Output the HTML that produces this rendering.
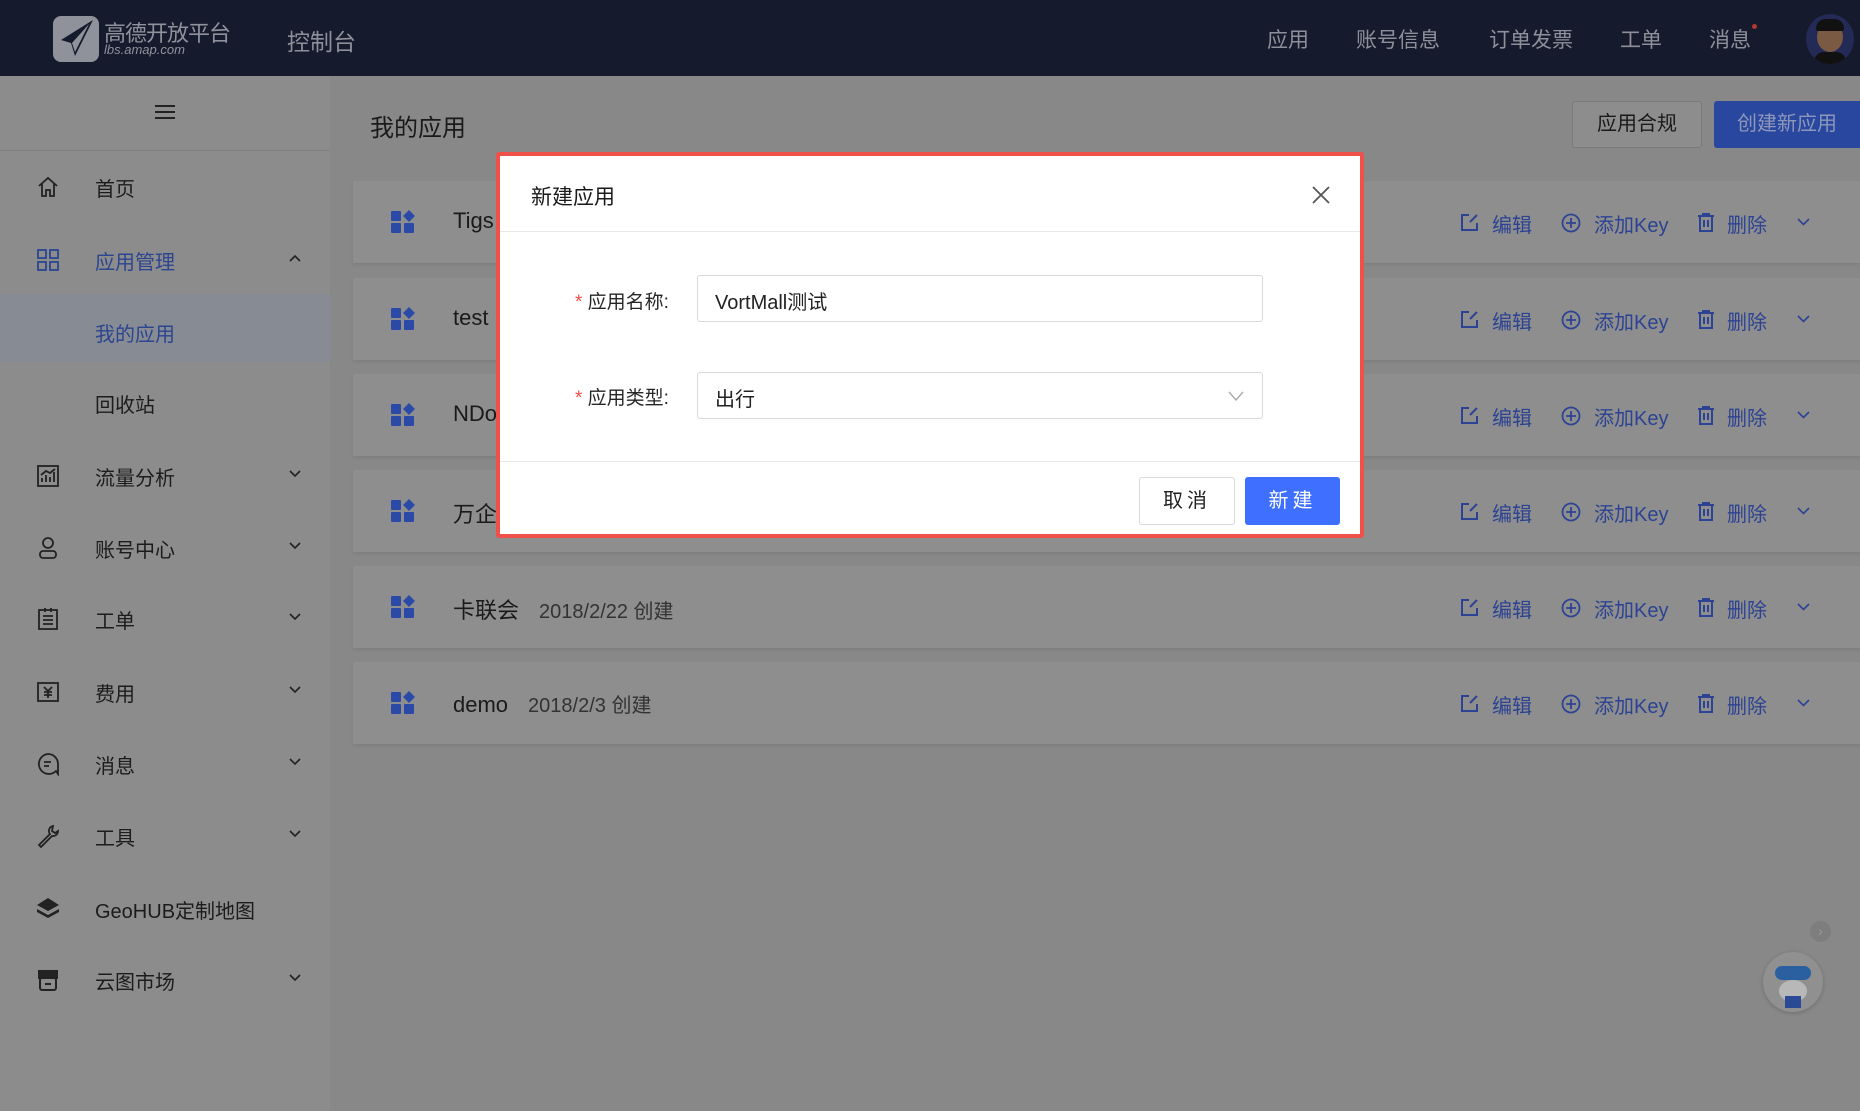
<!DOCTYPE html>
<html><head><meta charset="utf-8"><style>
*{margin:0;padding:0;box-sizing:border-box}
body{width:1860px;height:1111px;overflow:hidden;position:relative;background:#888888;font-family:"Liberation Sans","Noto Sans CJK SC",sans-serif;color:#1e1e1e}
.abs{position:absolute}
.hdr{left:0;top:0;width:1860px;height:76px;background:#161a2d}
.nav{top:24px;font-size:21px;color:#8e9099}
.side{left:0;top:76px;width:330px;height:1035px;background:#8c8c8c}
.mi{position:absolute;left:0;width:330px;height:60px;font-size:20px;color:#1c1c1c}
.mi .t{position:absolute;left:95px;top:16px}
.mi .ic{position:absolute;left:36px;top:18px;width:24px;height:24px}
.mi .ch{position:absolute;left:289px;top:24px}
.card{left:353px;width:1507px;height:82px;background:#8e8e8e;box-shadow:0 2px 3px rgba(0,0,0,.08)}
.card .gi{position:absolute;left:38px;top:29px}
.card .nm{position:absolute;left:100px;top:27px;font-size:22px;color:#1a1a1a}
.card .dt{font-size:20px;color:#333;margin-left:20px}
.act{position:absolute;top:28px;font-size:20px;color:#2c4393}
.ai{position:absolute;top:32px}
.dlg{left:496px;top:152px;width:868px;height:386px;background:#fff;border:4px solid #f0504a;border-radius:3px}
.lbl{position:absolute;font-size:19px;color:#262626}
.inp{position:absolute;left:697px;width:566px;height:47px;border:1px solid #d9d9d9;border-radius:3px;background:#fff;font-size:20px;padding:10px 17px;color:#222}
</style></head><body>
<div class="abs hdr">
  <svg class="abs" style="left:53px;top:16px" width="46" height="46" viewBox="0 0 46 46"><rect x="0" y="0" width="46" height="46" rx="8" fill="#8f929b"/><path d="M40 4 L8 24 L18 27 L22 40 Z" fill="#161a2d"/><path d="M36 8 L19 27 L22 36 Z" fill="#8f929b"/></svg>
  <div class="abs" style="left:104px;top:16px;font-size:22px;color:#8f929b;letter-spacing:-1px">高德开放平台</div>
  <div class="abs" style="left:104px;top:42px;font-size:13px;color:#8f929b;font-style:italic">lbs.amap.com</div>
  <div class="abs" style="left:287px;top:23px;font-size:23px;color:#8e9099">控制台</div>
  <div class="abs nav" style="left:1267px">应用</div>
  <div class="abs nav" style="left:1356px">账号信息</div>
  <div class="abs nav" style="left:1489px">订单发票</div>
  <div class="abs nav" style="left:1620px">工单</div>
  <div class="abs nav" style="left:1709px">消息</div>
  <div class="abs" style="left:1752px;top:24px;width:5px;height:5px;border-radius:50%;background:#b03a2a"></div>
  <div class="abs" style="left:1806px;top:14px;width:48px;height:50px;border-radius:50%;background:#232a55;overflow:hidden">
    <div class="abs" style="left:11px;top:8px;width:26px;height:30px;border-radius:50%;background:#7b5a44"></div>
    <div class="abs" style="left:10px;top:5px;width:28px;height:12px;border-radius:12px 12px 3px 3px;background:#111"></div>
    <div class="abs" style="left:8px;top:38px;width:32px;height:14px;border-radius:10px 10px 0 0;background:#111"></div>
  </div>
</div>
<div class="abs side">
  <div class="abs" style="left:155px;top:29px;width:20px;height:14px;border-top:2px solid #222;border-bottom:2px solid #222"><div style="margin-top:4px;height:2px;background:#222"></div></div>
  <div class="abs" style="left:0;top:74px;width:330px;height:1px;background:#7f7f7f"></div>
  <div class="abs" style="left:0;top:218px;width:330px;height:68px;background:#878b93"></div>
</div>
<div class="mi" style="top:157px"><svg class="ic" viewBox="0 0 24 24" fill="none" stroke="#222" stroke-width="1.8"><path d="M3 11 L12 3 L21 11 M6 9 V21 H10 V15 H14 V21 H18 V9"/></svg><span class="t">首页</span></div>
<div class="mi" style="top:230px;color:#2b4590"><svg class="ic" viewBox="0 0 24 24" fill="none" stroke="#2b4590" stroke-width="1.8"><rect x="2" y="2" width="8" height="8"/><rect x="14" y="2" width="8" height="8"/><rect x="2" y="14" width="8" height="8"/><rect x="14" y="14" width="8" height="8"/></svg><span class="t">应用管理</span><svg class="ch" width="12" height="8" viewBox="0 0 12 8" fill="none" stroke="#222" stroke-width="1.6"><path d="M1 7 L6 2 L11 7"/></svg></div>
<div class="mi" style="top:302px;color:#2b4590"><span class="t">我的应用</span></div>
<div class="mi" style="top:373px"><span class="t">回收站</span></div>
<div class="mi" style="top:446px"><svg class="ic" viewBox="0 0 24 24" fill="none" stroke="#222" stroke-width="1.8"><rect x="2" y="2" width="20" height="20"/><path d="M6 18 V14 M10 18 V11 M14 18 V13 M18 18 V8 M5 11 L10 7 L14 9 L19 5"/></svg><span class="t">流量分析</span><svg class="ch" width="12" height="8" viewBox="0 0 12 8" fill="none" stroke="#222" stroke-width="1.6"><path d="M1 1 L6 6 L11 1"/></svg></div>
<div class="mi" style="top:518px"><svg class="ic" viewBox="0 0 24 24" fill="none" stroke="#222" stroke-width="1.8"><circle cx="12" cy="7" r="5"/><rect x="4" y="15" width="16" height="7" rx="3"/></svg><span class="t">账号中心</span><svg class="ch" width="12" height="8" viewBox="0 0 12 8" fill="none" stroke="#222" stroke-width="1.6"><path d="M1 1 L6 6 L11 1"/></svg></div>
<div class="mi" style="top:589px"><svg class="ic" viewBox="0 0 24 24" fill="none" stroke="#222" stroke-width="1.8"><rect x="3" y="3" width="18" height="19"/><path d="M7 9 H17 M7 13 H17 M7 17 H17 M9 1 V5 M15 1 V5"/></svg><span class="t">工单</span><svg class="ch" width="12" height="8" viewBox="0 0 12 8" fill="none" stroke="#222" stroke-width="1.6"><path d="M1 1 L6 6 L11 1"/></svg></div>
<div class="mi" style="top:662px"><svg class="ic" viewBox="0 0 24 24" fill="none" stroke="#222" stroke-width="1.8"><rect x="2" y="3" width="20" height="18"/><path d="M8 7 L12 11 L16 7 M12 11 V18 M8 12 H16 M8 15 H16"/></svg><span class="t">费用</span><svg class="ch" width="12" height="8" viewBox="0 0 12 8" fill="none" stroke="#222" stroke-width="1.6"><path d="M1 1 L6 6 L11 1"/></svg></div>
<div class="mi" style="top:734px"><svg class="ic" viewBox="0 0 24 24" fill="none" stroke="#222" stroke-width="1.8"><path d="M12 2 A10 10 0 1 0 20 19 L22 22 V12 A10 10 0 0 0 12 2 Z M8 10 H15 M8 14 H13"/></svg><span class="t">消息</span><svg class="ch" width="12" height="8" viewBox="0 0 12 8" fill="none" stroke="#222" stroke-width="1.6"><path d="M1 1 L6 6 L11 1"/></svg></div>
<div class="mi" style="top:806px"><svg class="ic" viewBox="0 0 24 24" fill="none" stroke="#222" stroke-width="1.8"><path d="M17 2 A5 5 0 0 0 14 10 L3 21 L5 23 L16 12 A5 5 0 0 0 22 7 L19 9 L16 7 Z"/></svg><span class="t">工具</span><svg class="ch" width="12" height="8" viewBox="0 0 12 8" fill="none" stroke="#222" stroke-width="1.6"><path d="M1 1 L6 6 L11 1"/></svg></div>
<div class="mi" style="top:879px"><svg class="ic" viewBox="0 0 24 24" fill="#222"><path d="M12 1 L23 8 L12 14 L1 8 Z"/><path d="M1 12 L12 18 L23 12 L23 15 L12 21 L1 15Z"/></svg><span class="t">GeoHUB定制地图</span></div>
<div class="mi" style="top:950px"><svg class="ic" viewBox="0 0 24 24" fill="none" stroke="#222" stroke-width="2"><path d="M3 10 V3 H21 V10 Z" fill="#222"/><rect x="4" y="10" width="16" height="12" rx="2"/><path d="M9 16 H15"/></svg><span class="t">云图市场</span><svg class="ch" width="12" height="8" viewBox="0 0 12 8" fill="none" stroke="#222" stroke-width="1.6"><path d="M1 1 L6 6 L11 1"/></svg></div>

<div class="abs" style="left:370px;top:108px;font-size:24px;color:#1a1a1a">我的应用</div>
<div class="abs" style="left:1572px;top:101px;width:130px;height:47px;border:1px solid #7a7a7a;border-radius:3px;background:#8d8d8d;font-size:20px;text-align:center;line-height:45px;color:#1a1a1a">应用合规</div>
<div class="abs" style="left:1714px;top:101px;width:146px;height:47px;border-radius:3px 0 0 3px;background:#2a479f;font-size:20px;text-align:center;line-height:47px;color:#8c97ba">创建新应用</div>

<div class="abs card" style="top:181px"><svg class="gi" width="24" height="24" viewBox="0 0 24 24" fill="#2b4aa8"><rect x="0" y="1" width="10" height="10" rx="1"/><path d="M18 0 L24 6 L18 12 L12 6Z"/><rect x="0" y="13" width="10" height="10" rx="1"/><rect x="13" y="13" width="10" height="10" rx="1"/></svg><div class="nm">Tigs</div>
<svg class="ai" style="left:1107px" width="19" height="19" viewBox="0 0 19 19" fill="none" stroke="#2c4393" stroke-width="2"><path d="M9 2 H2 V17 H17 V10 M17 2 L10 9"/></svg><div class="act" style="left:1139px">编辑</div>
<svg class="ai" style="left:1208px" width="20" height="20" viewBox="0 0 20 20" fill="none" stroke="#2c4393" stroke-width="1.8"><circle cx="10" cy="10" r="8.5"/><path d="M10 5 V15 M5 10 H15"/></svg><div class="act" style="left:1241px">添加Key</div>
<svg class="ai" style="left:1344px" width="18" height="19" viewBox="0 0 18 19" fill="none" stroke="#2c4393" stroke-width="2"><path d="M1 3 H17 M6 3 V1 H12 V3 M3 3 V18 H15 V3 M7 7 V14 M11 7 V14"/></svg><div class="act" style="left:1374px">删除</div>
<svg class="ai" style="left:1444px;top:37px" width="13" height="8" viewBox="0 0 13 8" fill="none" stroke="#2c4393" stroke-width="1.6"><path d="M1 1 L6.5 6.5 L12 1"/></svg></div>

<div class="abs card" style="top:278px"><svg class="gi" width="24" height="24" viewBox="0 0 24 24" fill="#2b4aa8"><rect x="0" y="1" width="10" height="10" rx="1"/><path d="M18 0 L24 6 L18 12 L12 6Z"/><rect x="0" y="13" width="10" height="10" rx="1"/><rect x="13" y="13" width="10" height="10" rx="1"/></svg><div class="nm">test</div>
<svg class="ai" style="left:1107px" width="19" height="19" viewBox="0 0 19 19" fill="none" stroke="#2c4393" stroke-width="2"><path d="M9 2 H2 V17 H17 V10 M17 2 L10 9"/></svg><div class="act" style="left:1139px">编辑</div>
<svg class="ai" style="left:1208px" width="20" height="20" viewBox="0 0 20 20" fill="none" stroke="#2c4393" stroke-width="1.8"><circle cx="10" cy="10" r="8.5"/><path d="M10 5 V15 M5 10 H15"/></svg><div class="act" style="left:1241px">添加Key</div>
<svg class="ai" style="left:1344px" width="18" height="19" viewBox="0 0 18 19" fill="none" stroke="#2c4393" stroke-width="2"><path d="M1 3 H17 M6 3 V1 H12 V3 M3 3 V18 H15 V3 M7 7 V14 M11 7 V14"/></svg><div class="act" style="left:1374px">删除</div>
<svg class="ai" style="left:1444px;top:37px" width="13" height="8" viewBox="0 0 13 8" fill="none" stroke="#2c4393" stroke-width="1.6"><path d="M1 1 L6.5 6.5 L12 1"/></svg></div>

<div class="abs card" style="top:374px"><svg class="gi" width="24" height="24" viewBox="0 0 24 24" fill="#2b4aa8"><rect x="0" y="1" width="10" height="10" rx="1"/><path d="M18 0 L24 6 L18 12 L12 6Z"/><rect x="0" y="13" width="10" height="10" rx="1"/><rect x="13" y="13" width="10" height="10" rx="1"/></svg><div class="nm">NDo</div>
<svg class="ai" style="left:1107px" width="19" height="19" viewBox="0 0 19 19" fill="none" stroke="#2c4393" stroke-width="2"><path d="M9 2 H2 V17 H17 V10 M17 2 L10 9"/></svg><div class="act" style="left:1139px">编辑</div>
<svg class="ai" style="left:1208px" width="20" height="20" viewBox="0 0 20 20" fill="none" stroke="#2c4393" stroke-width="1.8"><circle cx="10" cy="10" r="8.5"/><path d="M10 5 V15 M5 10 H15"/></svg><div class="act" style="left:1241px">添加Key</div>
<svg class="ai" style="left:1344px" width="18" height="19" viewBox="0 0 18 19" fill="none" stroke="#2c4393" stroke-width="2"><path d="M1 3 H17 M6 3 V1 H12 V3 M3 3 V18 H15 V3 M7 7 V14 M11 7 V14"/></svg><div class="act" style="left:1374px">删除</div>
<svg class="ai" style="left:1444px;top:37px" width="13" height="8" viewBox="0 0 13 8" fill="none" stroke="#2c4393" stroke-width="1.6"><path d="M1 1 L6.5 6.5 L12 1"/></svg></div>

<div class="abs card" style="top:470px"><svg class="gi" width="24" height="24" viewBox="0 0 24 24" fill="#2b4aa8"><rect x="0" y="1" width="10" height="10" rx="1"/><path d="M18 0 L24 6 L18 12 L12 6Z"/><rect x="0" y="13" width="10" height="10" rx="1"/><rect x="13" y="13" width="10" height="10" rx="1"/></svg><div class="nm">万企</div>
<svg class="ai" style="left:1107px" width="19" height="19" viewBox="0 0 19 19" fill="none" stroke="#2c4393" stroke-width="2"><path d="M9 2 H2 V17 H17 V10 M17 2 L10 9"/></svg><div class="act" style="left:1139px">编辑</div>
<svg class="ai" style="left:1208px" width="20" height="20" viewBox="0 0 20 20" fill="none" stroke="#2c4393" stroke-width="1.8"><circle cx="10" cy="10" r="8.5"/><path d="M10 5 V15 M5 10 H15"/></svg><div class="act" style="left:1241px">添加Key</div>
<svg class="ai" style="left:1344px" width="18" height="19" viewBox="0 0 18 19" fill="none" stroke="#2c4393" stroke-width="2"><path d="M1 3 H17 M6 3 V1 H12 V3 M3 3 V18 H15 V3 M7 7 V14 M11 7 V14"/></svg><div class="act" style="left:1374px">删除</div>
<svg class="ai" style="left:1444px;top:37px" width="13" height="8" viewBox="0 0 13 8" fill="none" stroke="#2c4393" stroke-width="1.6"><path d="M1 1 L6.5 6.5 L12 1"/></svg></div>

<div class="abs card" style="top:566px"><svg class="gi" width="24" height="24" viewBox="0 0 24 24" fill="#2b4aa8"><rect x="0" y="1" width="10" height="10" rx="1"/><path d="M18 0 L24 6 L18 12 L12 6Z"/><rect x="0" y="13" width="10" height="10" rx="1"/><rect x="13" y="13" width="10" height="10" rx="1"/></svg><div class="nm">卡联会<span class="dt">2018/2/22 创建</span></div>
<svg class="ai" style="left:1107px" width="19" height="19" viewBox="0 0 19 19" fill="none" stroke="#2c4393" stroke-width="2"><path d="M9 2 H2 V17 H17 V10 M17 2 L10 9"/></svg><div class="act" style="left:1139px">编辑</div>
<svg class="ai" style="left:1208px" width="20" height="20" viewBox="0 0 20 20" fill="none" stroke="#2c4393" stroke-width="1.8"><circle cx="10" cy="10" r="8.5"/><path d="M10 5 V15 M5 10 H15"/></svg><div class="act" style="left:1241px">添加Key</div>
<svg class="ai" style="left:1344px" width="18" height="19" viewBox="0 0 18 19" fill="none" stroke="#2c4393" stroke-width="2"><path d="M1 3 H17 M6 3 V1 H12 V3 M3 3 V18 H15 V3 M7 7 V14 M11 7 V14"/></svg><div class="act" style="left:1374px">删除</div>
<svg class="ai" style="left:1444px;top:37px" width="13" height="8" viewBox="0 0 13 8" fill="none" stroke="#2c4393" stroke-width="1.6"><path d="M1 1 L6.5 6.5 L12 1"/></svg></div>

<div class="abs card" style="top:662px"><svg class="gi" width="24" height="24" viewBox="0 0 24 24" fill="#2b4aa8"><rect x="0" y="1" width="10" height="10" rx="1"/><path d="M18 0 L24 6 L18 12 L12 6Z"/><rect x="0" y="13" width="10" height="10" rx="1"/><rect x="13" y="13" width="10" height="10" rx="1"/></svg><div class="nm">demo<span class="dt">2018/2/3 创建</span></div>
<svg class="ai" style="left:1107px" width="19" height="19" viewBox="0 0 19 19" fill="none" stroke="#2c4393" stroke-width="2"><path d="M9 2 H2 V17 H17 V10 M17 2 L10 9"/></svg><div class="act" style="left:1139px">编辑</div>
<svg class="ai" style="left:1208px" width="20" height="20" viewBox="0 0 20 20" fill="none" stroke="#2c4393" stroke-width="1.8"><circle cx="10" cy="10" r="8.5"/><path d="M10 5 V15 M5 10 H15"/></svg><div class="act" style="left:1241px">添加Key</div>
<svg class="ai" style="left:1344px" width="18" height="19" viewBox="0 0 18 19" fill="none" stroke="#2c4393" stroke-width="2"><path d="M1 3 H17 M6 3 V1 H12 V3 M3 3 V18 H15 V3 M7 7 V14 M11 7 V14"/></svg><div class="act" style="left:1374px">删除</div>
<svg class="ai" style="left:1444px;top:37px" width="13" height="8" viewBox="0 0 13 8" fill="none" stroke="#2c4393" stroke-width="1.6"><path d="M1 1 L6.5 6.5 L12 1"/></svg></div>

<div class="abs" style="left:1810px;top:921px;width:21px;height:21px;border-radius:50%;background:#7e7e7e;color:#999;font-size:14px;text-align:center;line-height:21px">›</div>
<div class="abs" style="left:1763px;top:952px;width:60px;height:60px;border-radius:50%;background:#909090;box-shadow:0 1px 4px rgba(0,0,0,.2)">
  <div class="abs" style="left:12px;top:14px;width:36px;height:14px;border-radius:7px;background:#2a5fa0"></div>
  <div class="abs" style="left:16px;top:28px;width:28px;height:22px;border-radius:50%;background:#b8b8b8"></div>
  <div class="abs" style="left:22px;top:44px;width:16px;height:12px;background:#2a4a95"></div>
</div>

<div class="abs dlg">
  <div class="abs" style="left:31px;top:25px;font-size:21px;color:#1a1a1a">新建应用</div>
  <svg class="abs" style="left:812px;top:30px" width="18" height="18" viewBox="0 0 18 18" stroke="#555" stroke-width="1.8"><path d="M1 1 L17 17 M17 1 L1 17"/></svg>
  <div class="abs" style="left:0;top:75px;width:860px;height:1px;background:#e8e8e8"></div>
  <div class="abs" style="left:0;top:305px;width:860px;height:1px;background:#e8e8e8"></div>
</div>
<div class="lbl" style="left:575px;top:287px"><span style="color:#f0504a">*</span> 应用名称:</div>
<div class="inp" style="top:275px">VortMall测试</div>
<div class="lbl" style="left:575px;top:383px"><span style="color:#f0504a">*</span> 应用类型:</div>
<div class="inp" style="top:372px">出行<svg class="abs" style="right:18px;top:18px" width="16" height="10" viewBox="0 0 16 10" fill="none" stroke="#aaa" stroke-width="1.4"><path d="M1 1 L8 9 L15 1"/></svg></div>
<div class="abs" style="left:1139px;top:477px;width:96px;height:48px;border:1px solid #d9d9d9;border-radius:3px;background:#fff;font-size:20px;text-align:center;line-height:46px;color:#222;letter-spacing:4px">取消</div>
<div class="abs" style="left:1245px;top:477px;width:95px;height:48px;border-radius:3px;background:#3f6fff;font-size:20px;text-align:center;line-height:48px;color:#fff;letter-spacing:4px">新建</div>
</body></html>
